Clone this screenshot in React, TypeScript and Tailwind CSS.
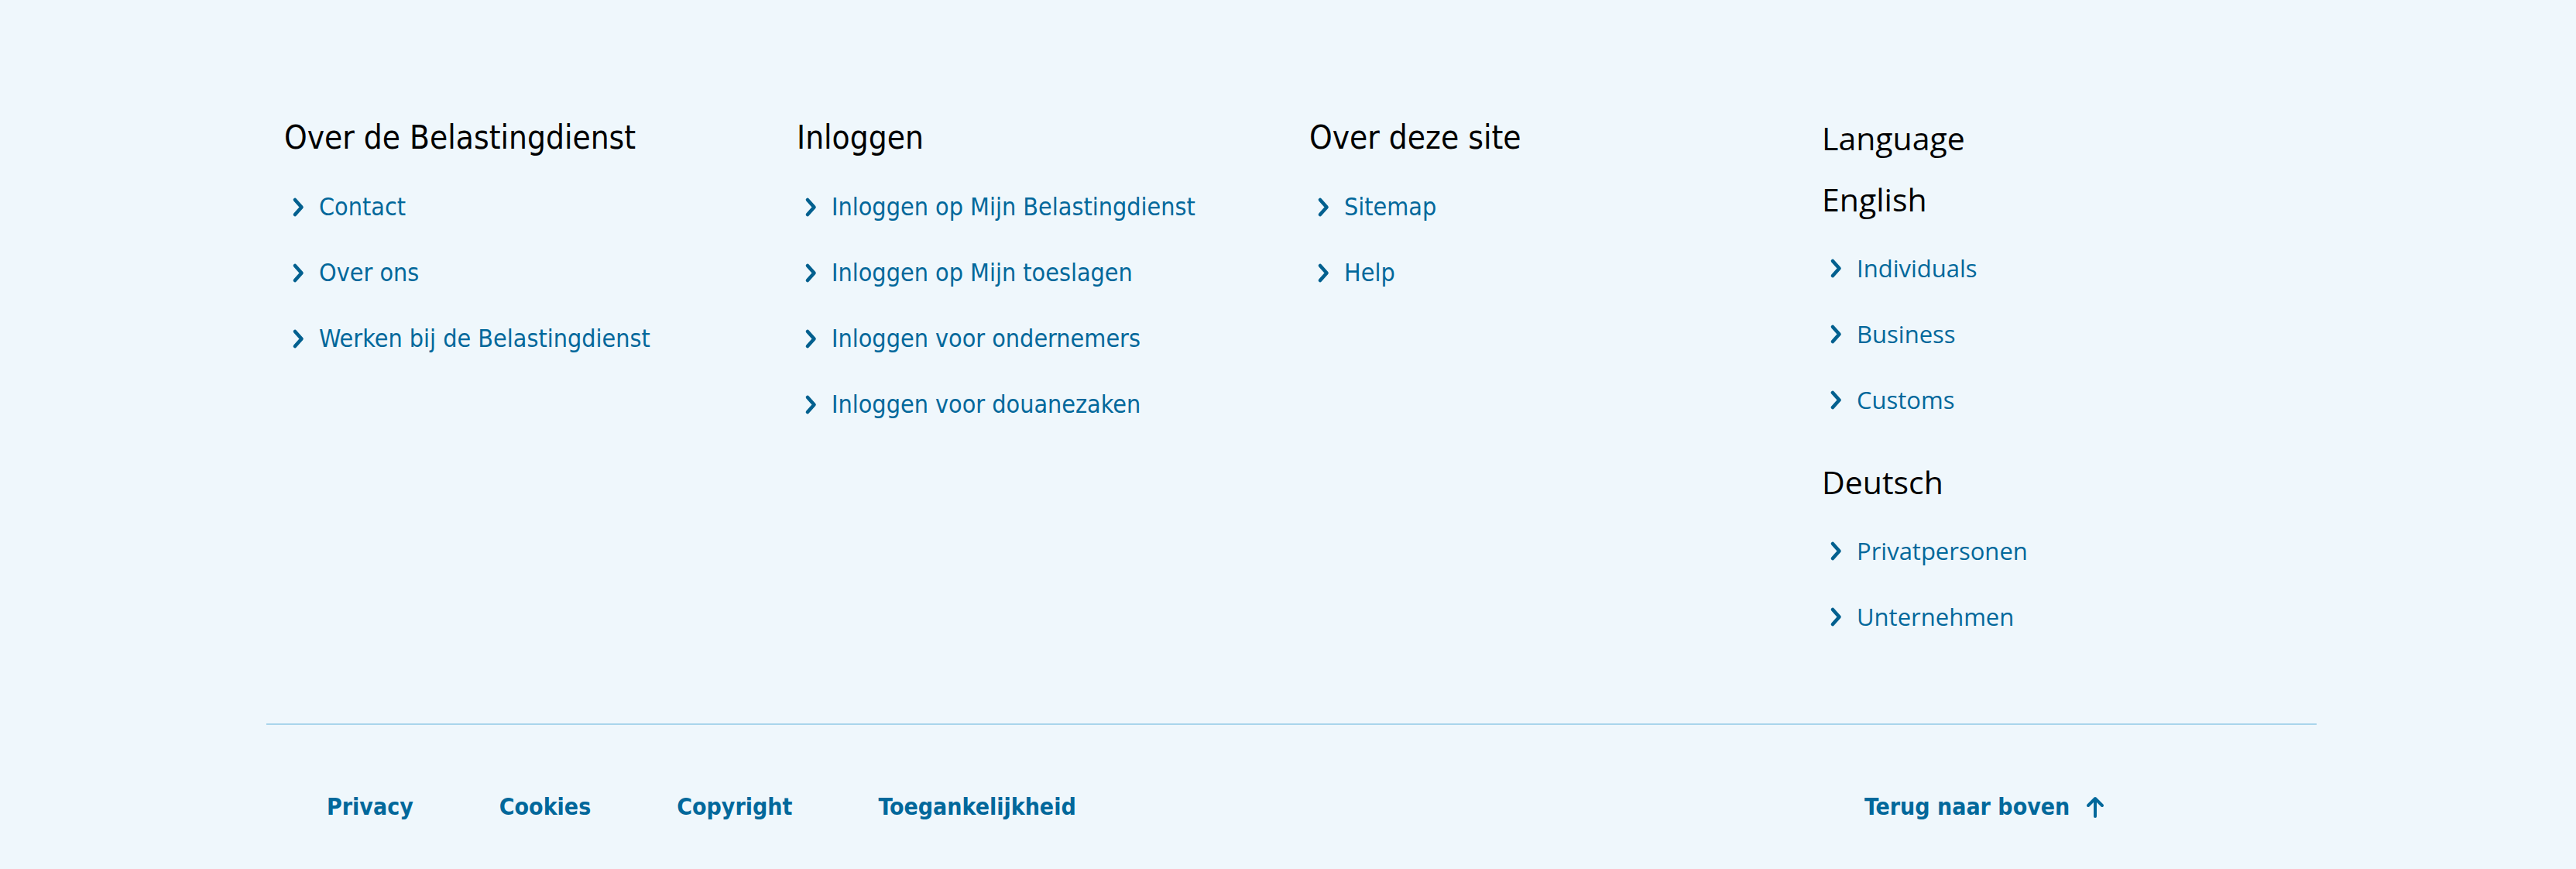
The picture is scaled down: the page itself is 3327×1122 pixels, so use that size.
import React from "react";

const blue = "#01689b";

const Chevron = () => (
  <svg width="17" height="27" viewBox="0 0 17 27" className="shrink-0" aria-hidden>
    <polyline
      points="4,4 12.5,13.5 4,23"
      fill="none"
      stroke="#02608f"
      strokeWidth="4.6"
      strokeLinecap="round"
      strokeLinejoin="round"
    />
  </svg>
);

const ArrowUp = () => (
  <svg width="26" height="30" viewBox="0 0 26 30" aria-hidden>
    <g fill="none" stroke={blue} strokeWidth="4" strokeLinecap="round" strokeLinejoin="round">
      <line x1="13" y1="5" x2="13" y2="27" />
      <polyline points="4,13 13,4 22,13" />
    </g>
  </svg>
);

const ro = { fontFamily: '"DejaVu Sans Condensed", "DejaVu Sans", sans-serif' };
const os = { fontFamily: '"Open Sans", "Noto Sans", sans-serif' };

interface LinkListProps {
  items: string[];
  narrow?: boolean;
}

const LinkList = ({ items, narrow = true }: LinkListProps) => (
  <ul className="mt-[44px] flex flex-col gap-[45px]">
    {items.map((item) => (
      <li key={item} className="flex items-center h-[40px] pl-[10px]">
        <Chevron />
        <a
          href="#"
          style={narrow ? ro : os}
          className={`ml-[18px] leading-[40px] text-[#01689b] ${narrow ? "text-[32px]" : "text-[31px]"}`}
        >
          {item}
        </a>
      </li>
    ))}
  </ul>
);

const columns = [
  {
    title: "Over de Belastingdienst",
    links: ["Contact", "Over ons", "Werken bij de Belastingdienst"],
  },
  {
    title: "Inloggen",
    links: [
      "Inloggen op Mijn Belastingdienst",
      "Inloggen op Mijn toeslagen",
      "Inloggen voor ondernemers",
      "Inloggen voor douanezaken",
    ],
  },
  {
    title: "Over deze site",
    links: ["Sitemap", "Help"],
  },
];

export default function App() {
  return (
    <div className="w-full h-[1122px] bg-[#eff7fc] overflow-hidden">
      <footer className="ml-[344px] w-[2648px] pt-[153px]">
        <div className="grid grid-cols-4">
          {columns.map((col) => (
            <div key={col.title} className="pl-[23px]">
              <h2 style={ro} className="text-[42px] leading-[50px] text-black">
                {col.title}
              </h2>
              <LinkList items={col.links} />
            </div>
          ))}
          <div className="pl-[23px]" style={os}>
            <h2 className="text-[41px] leading-[50px] text-black">Language</h2>
            <h3 className="mt-[29px] text-[41px] leading-[50px] text-black">English</h3>
            <LinkList items={["Individuals", "Business", "Customs"]} narrow={false} />
            <h3 className="mt-[61px] text-[41px] leading-[50px] text-black">Deutsch</h3>
            <LinkList items={["Privatpersonen", "Unternehmen"]} narrow={false} />
          </div>
        </div>

        <div className="mt-[118px] h-[2px] bg-[#a9d5ec]" />

        <div className="grid grid-cols-4 mt-[86px]" style={ro}>
          <nav className="col-span-3 pl-[78px] flex items-center gap-[111px]">
            {["Privacy", "Cookies", "Copyright", "Toegankelijkheid"].map((l) => (
              <a key={l} href="#" className="text-[30px] leading-[40px] font-bold text-[#01689b]">
                {l}
              </a>
            ))}
          </nav>
          <div className="pl-[78px] flex items-center">
            <a href="#" className="flex items-center gap-[20px] text-[30px] leading-[40px] font-bold text-[#01689b]">
              Terug naar boven
              <ArrowUp />
            </a>
          </div>
        </div>
      </footer>
    </div>
  );
}
